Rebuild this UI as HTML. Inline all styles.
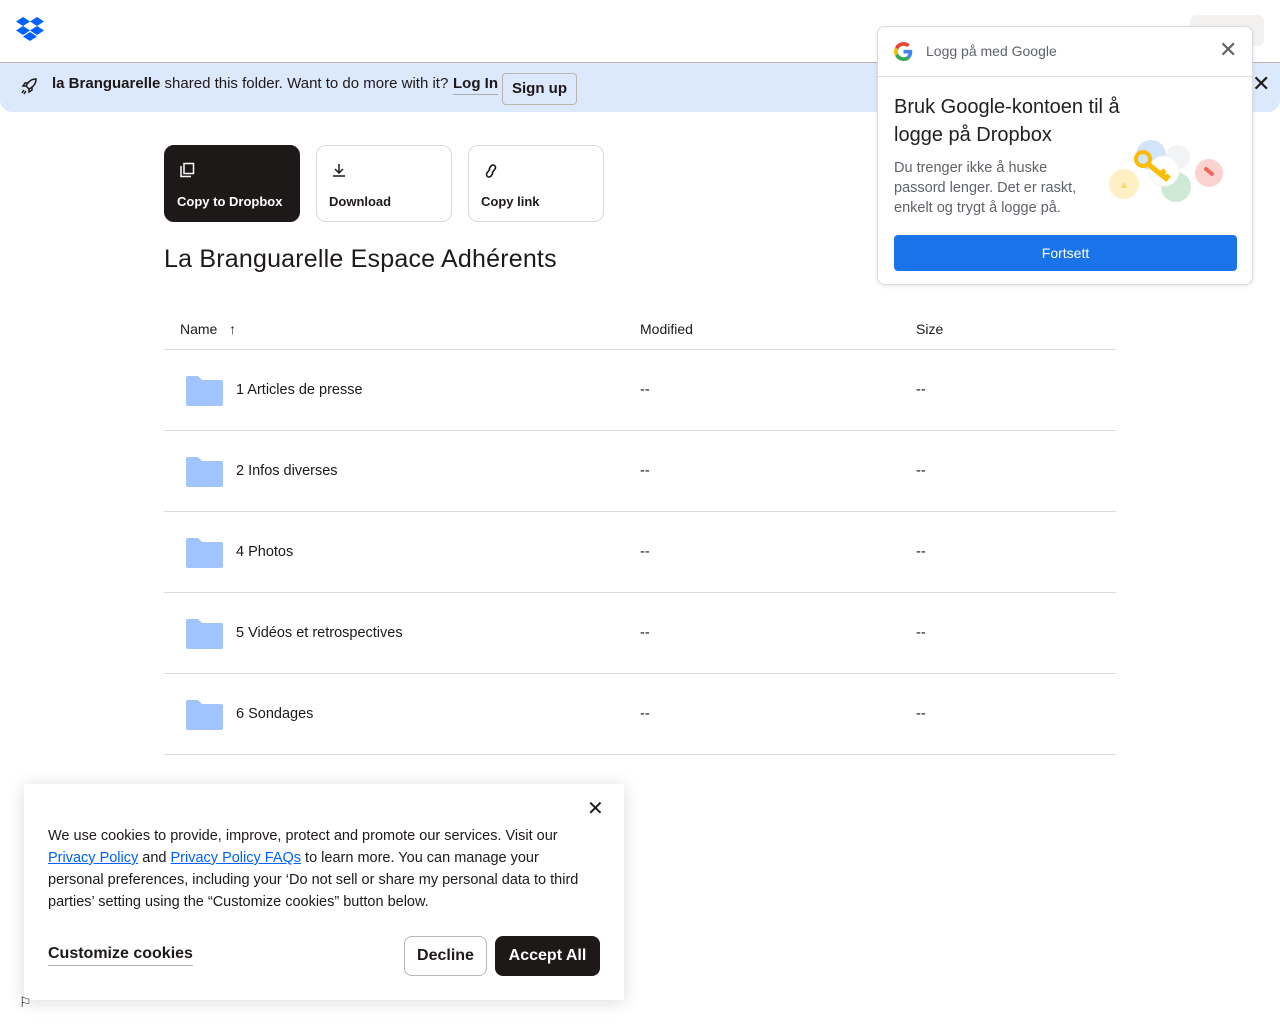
<!DOCTYPE html>
<html><head><meta charset="utf-8"><style>
*{box-sizing:border-box;margin:0;padding:0}
body{width:1280px;height:1024px;overflow:hidden;background:#fff;font-family:"Liberation Sans",sans-serif;color:#1e1919;position:relative}
.hdr{position:absolute;left:0;top:0;width:1280px;height:63px;border-bottom:1px solid #bbb5ae}
.ban{position:absolute;left:0;top:63px;width:1280px;height:49px;background:#dce8fc;border-radius:0 0 12px 12px;font-size:15px}
.ban .t{position:absolute;left:52px;top:12px}
.ban .li{position:absolute;left:453px;top:12px;font-weight:bold;border-bottom:1px solid #aaa;padding-bottom:2px}
.ban .su{position:absolute;left:502px;top:10px;width:75px;height:32px;border:1px solid #bbb5ae;border-radius:4px;font-weight:bold;text-align:center;line-height:30px}
.btn{position:absolute;top:145px;width:136px;height:77px;border:1px solid #dcdad6;border-radius:10px;font-size:13px;font-weight:bold}
.btn span{position:absolute;left:12px;top:48px}
.btn svg{position:absolute;left:14px;top:16px}
h1{position:absolute;left:164px;top:245px;font-size:25px;font-weight:normal;letter-spacing:0.2px}
.th{position:absolute;top:321px;font-size:14px}
.line{position:absolute;left:164px;width:952px;height:1px;background:#dedbd7}
.row{position:absolute;left:164px;width:952px;height:81px;font-size:14.5px}
.row .f{position:absolute;left:22px;top:26px}
.row .n{position:absolute;left:72px;top:32px}
.row .m{position:absolute;left:476px;top:32px}
.row .s{position:absolute;left:752px;top:32px}
.ck{position:absolute;left:24px;top:784px;width:600px;height:216px;background:#fff;box-shadow:0 2px 16px rgba(0,0,0,.15);font-size:14.5px}
.ck p{position:absolute;left:24px;top:41px;width:548px;line-height:22px}
.ck a{color:#0061fe;text-decoration:underline}
.gp{position:absolute;left:877px;top:26px;width:376px;height:259px;background:#fff;border:1px solid #dadce0;border-radius:8px;box-shadow:0 1px 4px rgba(0,0,0,.1);font-family:"Liberation Sans",sans-serif}
</style></head><body>
<div class="hdr">
<svg style="position:absolute;left:16px;top:17px" width="28" height="24" viewBox="0 0 28 24"><g fill="#0061fe"><path d="M7 0L0 4.5 7 9 14 4.5z"/><path d="M21 0L14 4.5 21 9 28 4.5z"/><path d="M0 13.5L7 18 14 13.5 7 9z"/><path d="M21 9L14 13.5 21 18 28 13.5z"/><path d="M7 19.5L14 24 21 19.5 14 15z"/></g></svg>
<div style="position:absolute;left:1190px;top:15px;width:74px;height:31px;background:#f3f2f1;border-radius:6px"></div>
</div>
<div class="ban">
<svg style="position:absolute;left:20px;top:14px" width="18" height="18" viewBox="0 0 18 18" fill="none" stroke="#1e1919" stroke-width="1.5"><path d="M16 2c-5 0-8 3-10 7l3 3c4-2 7-5 7-10z"/><path d="M6 9H3l2-3h3M9 12v3l3-2v-3"/><path d="M4 13l-2 3M6 14l-2 3"/></svg>
<div class="t"><b>la Branguarelle</b> shared this folder. Want to do more with it?</div>
<div class="li">Log In</div><div class="su">Sign up</div>
<div style="position:absolute;left:1252px;top:8px;font-size:22px">✕</div>
</div>
<div class="btn" style="left:164px;background:#1e1919;border-color:#1e1919;color:#fff"><svg width="16" height="16" viewBox="0 0 16 16" fill="none" stroke="#fff" stroke-width="1.5"><rect x="5" y="1.5" width="9.5" height="10"/><path d="M2 4v10.5h10"/></svg><span>Copy to Dropbox</span></div>
<div class="btn" style="left:316px"><svg width="16" height="16" viewBox="0 0 16 16" fill="none" stroke="#1e1919" stroke-width="1.5"><path d="M8 2v8M4 7l4 4 4-4M2 14h12"/></svg><span>Download</span></div>
<div class="btn" style="left:468px"><svg width="16" height="18" viewBox="0 0 16 18" fill="none" stroke="#1e1919" stroke-width="1.6"><path d="M7 7l-3 4a2.5 2.5 0 004 3l2-3M9 11l3-4a2.5 2.5 0 00-4-3L6 7"/></svg><span>Copy link</span></div>
<h1>La Branguarelle Espace Adhérents</h1>
<div class="th" style="left:180px">Name &nbsp;&nbsp;<b>↑</b></div>
<div class="th" style="left:640px">Modified</div>
<div class="th" style="left:916px">Size</div>
<div class="line" style="top:349px"></div>
<div class="row" style="top:350px"><svg class="f" width="37" height="30" viewBox="0 0 37 30"><path d="M0 2a2 2 0 012-2h10l4 4h19a2 2 0 012 2v22a2 2 0 01-2 2H2a2 2 0 01-2-2z" fill="#a1c3fe"/></svg><span class="n">1 Articles de presse</span><span class="m">--</span><span class="s">--</span></div>
<div class="line" style="top:430px"></div>
<div class="row" style="top:431px"><svg class="f" width="37" height="30" viewBox="0 0 37 30"><path d="M0 2a2 2 0 012-2h10l4 4h19a2 2 0 012 2v22a2 2 0 01-2 2H2a2 2 0 01-2-2z" fill="#a1c3fe"/></svg><span class="n">2 Infos diverses</span><span class="m">--</span><span class="s">--</span></div>
<div class="line" style="top:511px"></div>
<div class="row" style="top:512px"><svg class="f" width="37" height="30" viewBox="0 0 37 30"><path d="M0 2a2 2 0 012-2h10l4 4h19a2 2 0 012 2v22a2 2 0 01-2 2H2a2 2 0 01-2-2z" fill="#a1c3fe"/></svg><span class="n">4 Photos</span><span class="m">--</span><span class="s">--</span></div>
<div class="line" style="top:592px"></div>
<div class="row" style="top:593px"><svg class="f" width="37" height="30" viewBox="0 0 37 30"><path d="M0 2a2 2 0 012-2h10l4 4h19a2 2 0 012 2v22a2 2 0 01-2 2H2a2 2 0 01-2-2z" fill="#a1c3fe"/></svg><span class="n">5 Vidéos et retrospectives</span><span class="m">--</span><span class="s">--</span></div>
<div class="line" style="top:673px"></div>
<div class="row" style="top:674px"><svg class="f" width="37" height="30" viewBox="0 0 37 30"><path d="M0 2a2 2 0 012-2h10l4 4h19a2 2 0 012 2v22a2 2 0 01-2 2H2a2 2 0 01-2-2z" fill="#a1c3fe"/></svg><span class="n">6 Sondages</span><span class="m">--</span><span class="s">--</span></div>
<div class="line" style="top:754px"></div>

<div class="ck">
<div style="position:absolute;left:563px;top:12px;font-size:20px">✕</div>
<p>We use cookies to provide, improve, protect and promote our services. Visit our <a>Privacy Policy</a> and <a>Privacy Policy FAQs</a> to learn more. You can manage your personal preferences, including your ‘Do not sell or share my personal data to third parties’ setting using the “Customize cookies” button below.</p>
<div style="position:absolute;left:24px;top:161px;font-size:16px;font-weight:bold;border-bottom:1px solid #bbb5ae;padding-bottom:2px">Customize cookies</div>
<div style="position:absolute;left:380px;top:152px;width:83px;height:40px;border:1px solid #bbb5ae;border-radius:8px;text-align:center;line-height:38px;font-size:16px;font-weight:bold">Decline</div>
<div style="position:absolute;left:471px;top:152px;width:105px;height:40px;background:#1e1919;color:#fff;border-radius:8px;text-align:center;line-height:40px;font-size:16px;font-weight:bold">Accept All</div>
</div>
<div style="position:absolute;left:19px;top:994px;font-size:14px">⚐</div>

<div class="gp">
<svg style="position:absolute;left:16px;top:15px" width="19" height="19" viewBox="0 0 48 48"><path fill="#EA4335" d="M24 9.5c3.5 0 6.6 1.2 9.1 3.6l6.8-6.8C35.8 2.4 30.3 0 24 0 14.6 0 6.6 5.4 2.7 13.3l7.9 6.1C12.5 13.6 17.8 9.5 24 9.5z"/><path fill="#4285F4" d="M46.1 24.5c0-1.6-.1-3.1-.4-4.5H24v9h12.4c-.5 2.9-2.2 5.4-4.7 7.1l7.6 5.9c4.4-4.1 6.8-10.1 6.8-17.5z"/><path fill="#FBBC05" d="M10.5 28.6c-.5-1.4-.8-3-.8-4.6s.3-3.2.8-4.6l-7.9-6.1C1 16.6 0 20.2 0 24s.9 7.4 2.6 10.7l7.9-6.1z"/><path fill="#34A853" d="M24 48c6.5 0 11.9-2.1 15.9-5.8l-7.6-5.9c-2.1 1.4-4.9 2.3-8.2 2.3-6.2 0-11.5-4.2-13.4-9.9l-7.9 6.1C6.6 42.6 14.6 48 24 48z"/></svg>
<div style="position:absolute;left:48px;top:16px;font-size:14px;color:#5f6368">Logg på med Google</div>
<div style="position:absolute;left:341px;top:10px;font-size:22px;color:#5f6368">✕</div>
<div style="position:absolute;left:0;top:49px;width:374px;height:1px;background:#dadce0"></div>
<div style="position:absolute;left:16px;top:66px;font-size:20px;line-height:28px;color:#202124;width:260px">Bruk Google-kontoen til å logge på Dropbox</div>
<div style="position:absolute;left:16px;top:131px;font-size:14.5px;line-height:20px;color:#5f6368;width:200px">Du trenger ikke å huske passord lenger. Det er raskt, enkelt og trygt å logge på.</div>
<svg style="position:absolute;left:228px;top:108px" width="125" height="80" viewBox="0 0 125 80"><circle cx="45" cy="20" r="15" fill="#d2e3fc"/><circle cx="72" cy="22" r="12" fill="#f1f3f4"/><circle cx="18" cy="49" r="15" fill="#fef0c3"/><circle cx="70" cy="52" r="15" fill="#ceead6"/><circle cx="103" cy="38" r="14" fill="#fad2cf"/><circle cx="58" cy="36" r="15" fill="#fff" stroke="#f1f3f4"/><circle cx="37" cy="24" r="7" fill="none" stroke="#fbbc04" stroke-width="4"/><path d="M42 29l20 16M55 39l4-4M60 43l3-3" stroke="#fbbc04" stroke-width="5"/><path d="M15 53l3-6 3 6z" fill="#fdd663"/><path d="M100 34l6 5" stroke="#ee675c" stroke-width="4" stroke-linecap="round"/></svg>
<div style="position:absolute;left:16px;top:208px;width:343px;height:36px;background:#1a73e8;border-radius:4px;color:#fff;text-align:center;line-height:36px;font-size:14px">Fortsett</div>
</div>
</body></html>
